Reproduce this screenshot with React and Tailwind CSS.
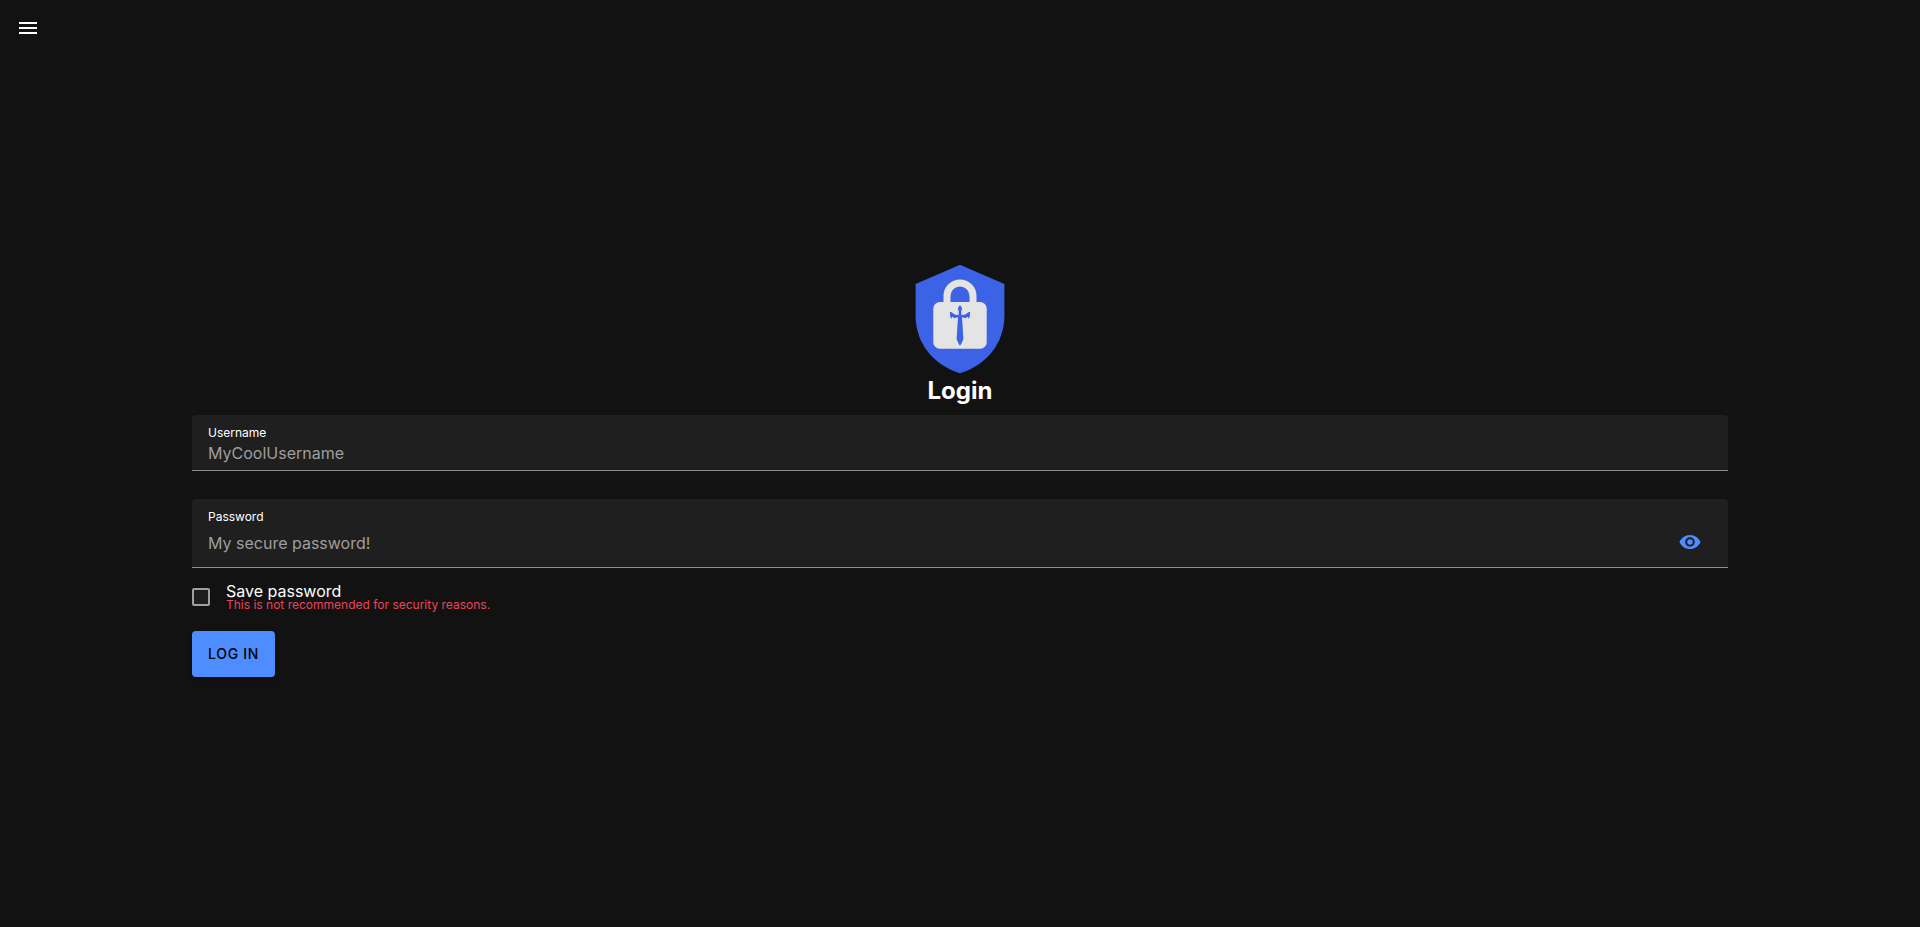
import { useState } from 'react';

function ShieldLogo() {
  return (
    <svg viewBox="0 0 90 110" className="h-[110px] w-[90px]" role="img" aria-label="Shield with a padlock">
      <path d="M45 .8 89.4 20v32c0 26-17 49-44.4 57.2C17.600 101 .6 78 .6 52V20Z" fill="#3c62e6" />
      <path d="M32 44V32a13 13 0 0 1 26 0v12" fill="none" stroke="#e4e4e4" strokeWidth="7" />
      <rect x="18.300" y="38" width="53.400" height="46.700" rx="6.500" fill="#e4e4e4" />
      <path
        d="M45 41.200c1.200 1 2 2.300 2 3.600 0 1-.6 1.800-.8 2.600l.2 3.600c2.600.1 4.800-.4 6.300-2.200.7-.8 1.600-1 2.500-.8-.5 1.600.2 3.500-.8 5.400-.2.500-.6.900-1 1-.1-.9-.5-1.300-1.200-1.300-.7.100-1.100.5-1.200 1.500-1.100-1.100-2.300-1.100-4-1.100l1.400 21.200c-.8 2.700-2 4.800-3.400 7.100-1.400-2.300-2.600-4.400-3.400-7.100L43 53.500c-1.700 0-2.900 0-4 1.100-.1-1-.5-1.400-1.200-1.500-.7 0-1.100.4-1.200 1.300-.4-.1-.8-.5-1-1-1-1.900-.3-3.800-.8-5.400.9-.2 1.800 0 2.500.8 1.500 1.800 3.700 2.300 6.300 2.200l.2-3.600c-.2-.8-.8-1.600-.8-2.600 0-1.300.8-2.600 2-3.600Z"
        fill="#3c62e6"
      />
    </svg>
  );
}

function EyeIcon({ crossed }) {
  return (
    <svg viewBox="0 0 512 512" className="size-6" fill="currentColor" aria-hidden="true">
      <path d="M256 105c-101.8 0-188.4 62.4-224 151 35.6 88.6 122.2 151 224 151s188.4-62.4 224-151c-35.6-88.6-122.2-151-224-151zm0 251.7c-56 0-101.8-45.3-101.8-100.7S200 155.3 256 155.3 357.8 200.6 357.8 256 312 356.7 256 356.7zm0-161.1c-33.6 0-61.1 27.2-61.1 60.4s27.5 60.4 61.1 60.4 61.1-27.2 61.1-60.4-27.5-60.4-61.1-60.4z" />
      {crossed && <path d="M80 80 432 432" stroke="currentColor" strokeWidth="36" />}
    </svg>
  );
}

export default function App() {
  const [visible, setVisible] = useState(false);

  return (
    <div className="flex min-h-screen flex-col bg-[#121212] font-['Inter',sans-serif] text-white">
      <header className="flex h-14 items-center px-1">
        <button type="button" aria-label="Menu" className="flex size-12 items-center justify-center">
          <svg viewBox="0 0 18 12" className="h-3 w-[18px]" fill="currentColor" aria-hidden="true">
            <path d="M0 0h18v2H0zM0 5h18v2H0zM0 10h18v2H0z" />
          </svg>
        </button>
      </header>

      <main className="flex grow flex-col items-center justify-center pb-[42px]">
        <ShieldLogo />
        <h1 className="mt-[3px] mb-2.5 text-2xl leading-7 font-bold">Login</h1>

        <form className="flex w-4/5 flex-col items-start" onSubmit={(e) => e.preventDefault()}>
          <div className="flex h-14 w-full flex-col rounded-t border-b border-[#8c8c8c] bg-[#1f1f1f] px-4 pt-2">
            <label htmlFor="username" className="text-xs leading-5">Username</label>
            <input
              id="username"
              type="text"
              placeholder="MyCoolUsername"
              className="h-5 w-full bg-transparent text-base outline-none placeholder:text-[#9e9e9e]"
            />
          </div>

          <div className="mt-7 flex h-[69px] w-full items-end rounded-t border-b border-[#8c8c8c] bg-[#1f1f1f] px-4">
            <div className="flex h-full grow flex-col pt-2">
              <label htmlFor="password" className="text-xs leading-5">Password</label>
              <input
                id="password"
                type={visible ? 'text' : 'password'}
                placeholder="My secure password!"
                className="h-8 w-full bg-transparent text-base outline-none placeholder:text-[#9e9e9e]"
              />
            </div>
            <button
              type="button"
              aria-label="Show password"
              onClick={() => setVisible(!visible)}
              className="flex h-[50px] w-11 items-center justify-center text-[#4d8dff]"
            >
              <EyeIcon crossed={visible} />
            </button>
          </div>

          <div className="mt-[15px] flex items-center gap-4">
            <input
              id="save"
              type="checkbox"
              className="size-[18px] appearance-none rounded-xs border-2 border-[#a0a0a0] bg-[#1e1e1e] checked:border-[#4d8dff] checked:bg-[#4d8dff]"
            />
            <label htmlFor="save" className="flex flex-col">
              <span className="text-base leading-4">Save password</span>
              <span className="text-xs leading-3 text-[#eb445a]">This is not recommended for security reasons.</span>
            </label>
          </div>

          <button
            type="submit"
            className="mt-5 h-[46px] rounded bg-[#4d8dff] px-4 text-sm font-medium tracking-wider text-black uppercase shadow-md"
          >
            Log in
          </button>
        </form>
      </main>
    </div>
  );
}
